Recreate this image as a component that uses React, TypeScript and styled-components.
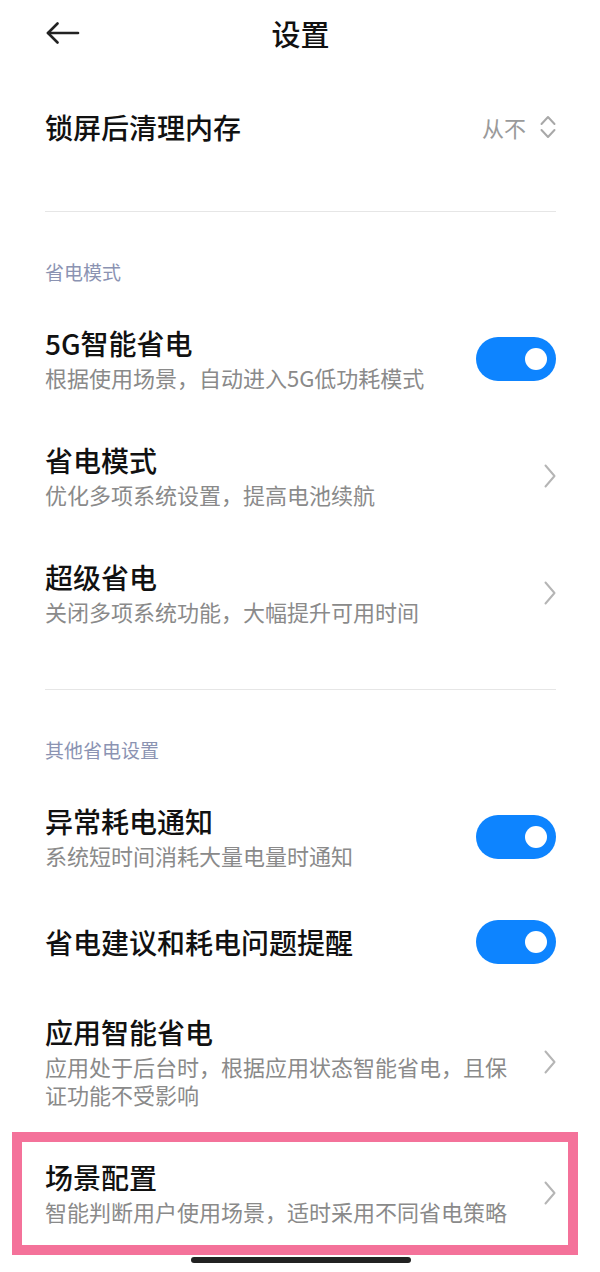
import * as React from 'react'
import styled, {createGlobalStyle} from 'styled-components'

const GlobalStyle = createGlobalStyle`
  html, body {
    margin: 0;
    padding: 0;
    background: #fff;
  }
  body {
    font-family: "Noto Sans CJK SC", "Noto Sans", "Liberation Sans", sans-serif;
    color: #111;
  }
`

const Page = styled.div`
  width: 600px;
  height: 1272px;
  box-sizing: border-box;
  padding: 0 44px 0 45px;
  overflow: hidden;
  background: #fff;
`

const Header = styled.header`
  height: 66px;
  display: grid;
  grid-template-columns: 1fr auto 1fr;
  align-items: center;
`

const BackButton = styled.button`
  justify-self: start;
  display: flex;
  align-items: center;
  padding: 0 0 0 1px;
  border: 0;
  background: none;
  color: #222;
`

const Title = styled.h1`
  margin: 0;
  font-size: 29px;
  font-weight: 500;
  line-height: 36px;
  color: #111;
`

const TopRow = styled.div`
  display: flex;
  align-items: center;
  justify-content: space-between;
  padding: 44px 0 67px;
`

const Value = styled.div`
  display: flex;
  align-items: center;
  gap: 14px;
  font-size: 22px;
  line-height: 34px;
  color: #9a9a9a;
`

const Divider = styled.hr`
  margin: 0;
  border: 0;
  height: 1px;
  background: #e6e6e6;
`

const Section = styled.section<{$bottom: number}>`
  padding-bottom: ${p => p.$bottom}px;
`

const SectionLabel = styled.div`
  padding: 48px 0 16px;
  font-size: 19px;
  line-height: 24px;
  color: #8b93b2;
`

const Item = styled.div<{$highlight?: boolean; $compact?: boolean}>`
  position: relative;
  display: flex;
  align-items: center;
  gap: 28px;
  padding: ${p => (p.$compact ? '25px 0' : '26px 0')};

  ${p => p.$highlight && `
    &::after {
      content: '';
      position: absolute;
      top: -2px;
      bottom: -4px;
      left: -33px;
      right: -22px;
      border: 10px solid #f4729a;
      pointer-events: none;
    }
  `}
`

const Texts = styled.div`
  flex: 1;
  min-width: 0;
  display: flex;
  flex-direction: column;
  gap: 3px;
`

const ItemTitle = styled.div`
  font-size: 28px;
  font-weight: 500;
  line-height: 34px;
  color: #111;
`

const ItemDesc = styled.div`
  font-size: 22px;
  line-height: 28px;
  color: #8a8a8a;
`

const Switch = styled.div<{$on: boolean}>`
  flex: none;
  position: relative;
  width: 80px;
  height: 44px;
  border-radius: 22px;
  background: ${p => (p.$on ? '#0d84ff' : '#d8d8d8')};

  &::after {
    content: '';
    position: absolute;
    top: 11px;
    ${p => (p.$on ? 'right: 9px;' : 'left: 9px;')}
    width: 22px;
    height: 22px;
    border-radius: 50%;
    background: #fff;
  }
`

const HomeBar = styled.div`
  width: 220px;
  height: 6px;
  margin: 6px auto 0;
  border-radius: 3px;
  background: #222;
`

const ArrowLeft = () => (
  <svg width="34" height="22" viewBox="0 0 34 22" fill="none" stroke="currentColor" strokeWidth="2.6" strokeLinecap="round" strokeLinejoin="round">
    <path d="M2 11 H32" />
    <path d="M11.5 1.5 L2 11 L11.5 20.5" />
  </svg>
)

const UpDown = () => (
  <svg width="16" height="26" viewBox="0 0 16 26" fill="none" stroke="#a8a8a8" strokeWidth="2" strokeLinecap="round" strokeLinejoin="round">
    <path d="M1.5 10 L8 3 L14.5 10" />
    <path d="M1.5 16 L8 23 L14.5 16" />
  </svg>
)

const Chevron = () => (
  <svg width="12" height="24" viewBox="0 0 12 24" fill="none" stroke="#b5b5b5" strokeWidth="2" strokeLinecap="round" strokeLinejoin="round" style={{flex: 'none'}}>
    <path d="M1.5 1.5 L10.5 12 L1.5 22.5" />
  </svg>
)

interface Setting {
  title: string
  desc?: string
  kind: 'switch' | 'link'
  highlight?: boolean
}

const powerModes: Setting[] = [
  {title: '5G智能省电', desc: '根据使用场景，自动进入5G低功耗模式', kind: 'switch'},
  {title: '省电模式', desc: '优化多项系统设置，提高电池续航', kind: 'link'},
  {title: '超级省电', desc: '关闭多项系统功能，大幅提升可用时间', kind: 'link'},
]

const otherSettings: Setting[] = [
  {title: '异常耗电通知', desc: '系统短时间消耗大量电量时通知', kind: 'switch'},
  {title: '省电建议和耗电问题提醒', kind: 'switch'},
  {title: '应用智能省电', desc: '应用处于后台时，根据应用状态智能省电，且保证功能不受影响', kind: 'link'},
  {title: '场景配置', desc: '智能判断用户使用场景，适时采用不同省电策略', kind: 'link', highlight: true},
]

const SettingItem = ({item}: {item: Setting}) => (
  <Item $highlight={item.highlight} $compact={!item.desc}>
    <Texts>
      <ItemTitle>{item.title}</ItemTitle>
      {item.desc && <ItemDesc>{item.desc}</ItemDesc>}
    </Texts>
    {item.kind === 'switch' ? <Switch $on /> : <Chevron />}
  </Item>
)

const App = () => {
  return (
    <Page>
      <GlobalStyle />
      <Header>
        <BackButton aria-label="返回">
          <ArrowLeft />
        </BackButton>
        <Title>设置</Title>
        <span />
      </Header>

      <TopRow>
        <ItemTitle>锁屏后清理内存</ItemTitle>
        <Value>
          从不
          <UpDown />
        </Value>
      </TopRow>
      <Divider />

      <Section $bottom={38}>
        <SectionLabel>省电模式</SectionLabel>
        {powerModes.map(item => (
          <SettingItem key={item.title} item={item} />
        ))}
      </Section>
      <Divider />

      <Section $bottom={0}>
        <SectionLabel>其他省电设置</SectionLabel>
        {otherSettings.map(item => (
          <SettingItem key={item.title} item={item} />
        ))}
      </Section>

      <HomeBar />
    </Page>
  )
}

export default App
